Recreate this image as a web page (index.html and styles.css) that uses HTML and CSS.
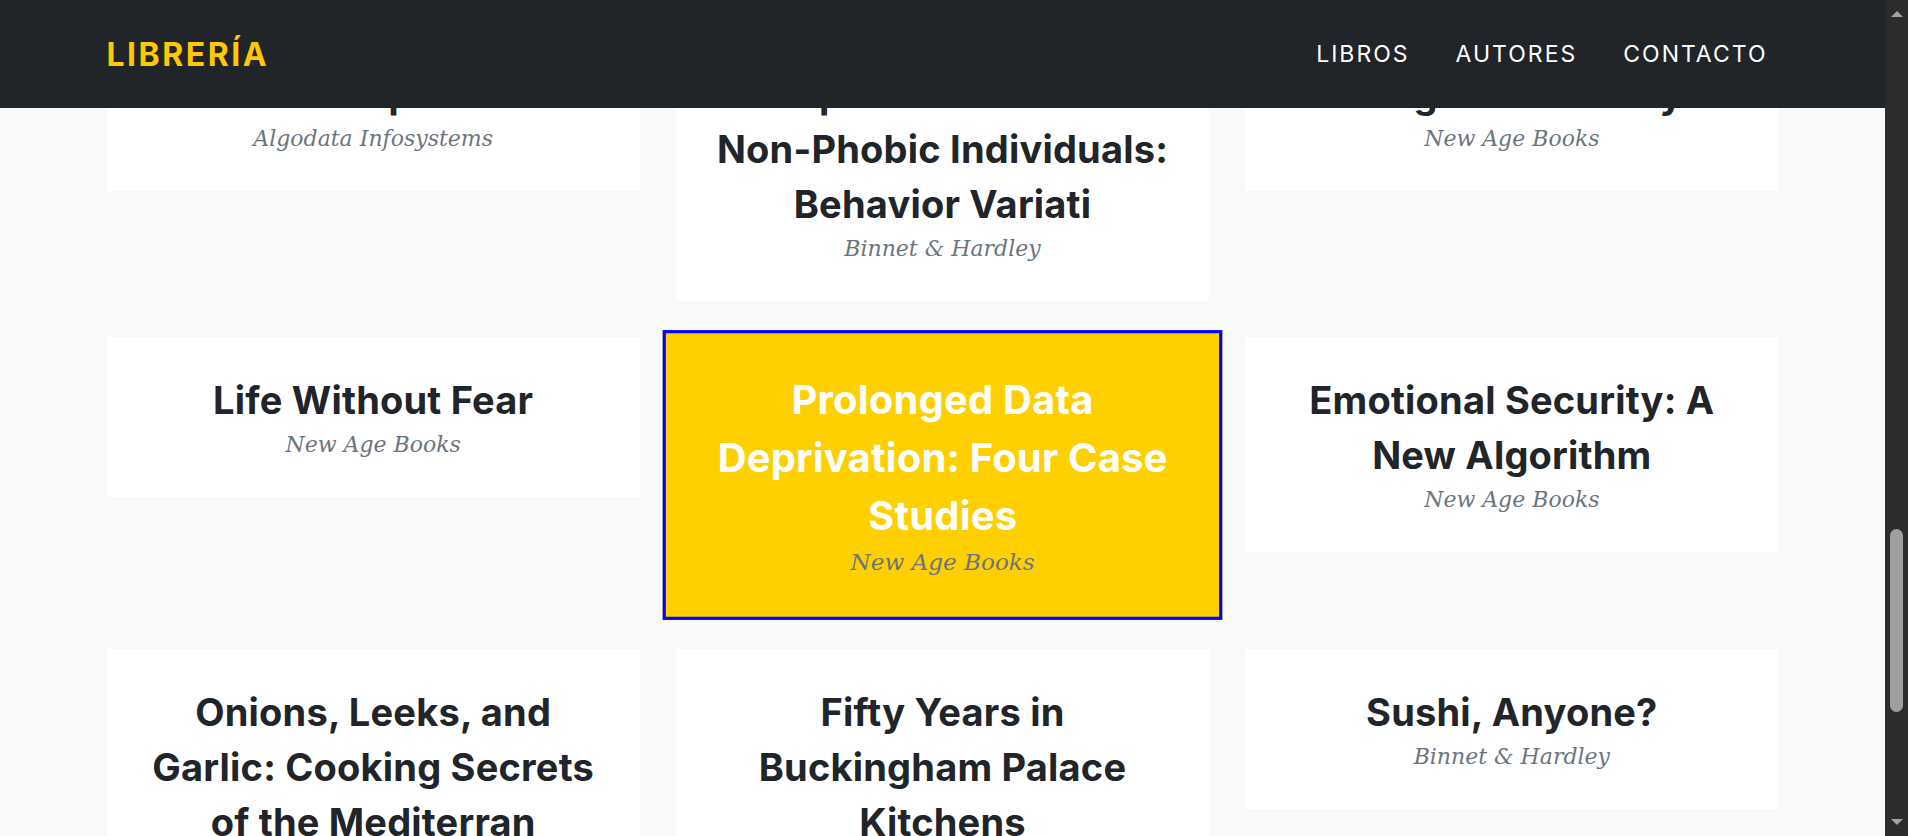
FILE: index.html
```html
<!DOCTYPE html>
<html lang="es">
<head>
<meta charset="utf-8">
<title>Librería</title>
<link rel="stylesheet" href="styles.css">
</head>
<body>
<div class="app">
  <div class="viewport" id="viewport">
    <nav class="navbar">
      <div class="container nav-inner">
        <a class="brand" href="#">Librería</a>
        <ul class="nav-links">
          <li><a href="#libros">Libros</a></li>
          <li><a href="#autores">Autores</a></li>
          <li><a href="#contacto">Contacto</a></li>
        </ul>
      </div>
    </nav>

    <section class="books-section" id="libros">
      <div class="container">
        <div class="book-grid">
          <article class="book"><h3 class="book-title">Net Etiquette</h3><p class="book-pub">Algodata Infosystems</p></article>
          <article class="book"><h3 class="book-title">Computer Phobic AND Non-Phobic Individuals: Behavior Variati</h3><p class="book-pub">Binnet &amp; Hardley</p></article>
          <article class="book"><h3 class="book-title">Is Anger the Enemy?</h3><p class="book-pub">New Age Books</p></article>
          <article class="book" id="anchor-row"><h3 class="book-title">Life Without Fear</h3><p class="book-pub">New Age Books</p></article>
          <article class="book is-active"><h3 class="book-title">Prolonged Data Deprivation: Four Case Studies</h3><p class="book-pub">New Age Books</p></article>
          <article class="book"><h3 class="book-title">Emotional Security: A New Algorithm</h3><p class="book-pub">New Age Books</p></article>
          <article class="book"><h3 class="book-title">Onions, Leeks, and Garlic: Cooking Secrets of the Mediterran</h3><p class="book-pub">Binnet &amp; Hardley</p></article>
          <article class="book"><h3 class="book-title">Fifty Years in Buckingham Palace Kitchens</h3><p class="book-pub">Binnet &amp; Hardley</p></article>
          <article class="book"><h3 class="book-title">Sushi, Anyone?</h3><p class="book-pub">Binnet &amp; Hardley</p></article>
        </div>
      </div>
    </section>
  </div>

  <div class="scrollbar" aria-hidden="true">
    <div class="sb-btn"><span class="sb-arrow-up"></span></div>
    <div class="sb-track"><div class="sb-thumb"></div></div>
    <div class="sb-btn"><span class="sb-arrow-down"></span></div>
  </div>
</div>
<script src="app.js"></script>
</body>
</html>
```

FILE: styles.css
```css
* { box-sizing: border-box; }

html, body {
  margin: 0;
  height: 100%;
  overflow: hidden;
}

body {
  font-family: "Inter", "DejaVu Sans", sans-serif;
  color: #212529;
  background: #f8f9fa;
}

.app {
  display: flex;
  height: 100vh;
}

.viewport {
  flex: 1;
  min-width: 0;
  overflow: hidden;
  background: #f8f9fa;
}

/* Scrollbar (dark theme) */
.scrollbar {
  width: 23px;
  flex: 0 0 23px;
  background: #2c2c2c;
  display: flex;
  flex-direction: column;
}
.sb-btn {
  height: 28px;
  display: flex;
  align-items: center;
  justify-content: center;
}
.sb-arrow-up {
  width: 0;
  height: 0;
  border-left: 6px solid transparent;
  border-right: 6px solid transparent;
  border-bottom: 6px solid #a3a3a3;
}
.sb-arrow-down {
  width: 0;
  height: 0;
  border-left: 6px solid transparent;
  border-right: 6px solid transparent;
  border-top: 6px solid #a3a3a3;
}
.sb-track {
  flex: 1;
  padding: 0 5px;
}
.sb-thumb {
  margin-top: 501px;
  height: 183px;
  background: #9f9f9f;
  border-radius: 7px;
}

.container {
  max-width: 1672px;
  margin: 0 auto;
}

/* Navbar */
.navbar {
  position: sticky;
  top: 0;
  z-index: 10;
  height: 108px;
  background: #212529;
}
.nav-inner {
  height: 100%;
  display: flex;
  align-items: center;
  justify-content: space-between;
}
.brand {
  font-family: "Inter", "DejaVu Sans", sans-serif;
  font-weight: 700;
  font-size: 32px;
  letter-spacing: 2.5px;
  text-transform: uppercase;
  color: #ffc800;
  text-decoration: none;
}
.nav-links {
  list-style: none;
  display: flex;
  gap: 46px;
  margin: 0;
  padding: 0 11px 0 0;
}
.nav-links a {
  font-family: "Inter", "DejaVu Sans", sans-serif;
  font-size: 23px;
  font-weight: 400;
  letter-spacing: 2px;
  text-transform: uppercase;
  color: #fff;
  text-decoration: none;
}

/* Books */
.books-section {
  padding: 0 0 200px;
}

.book-grid {
  display: grid;
  grid-template-columns: repeat(3, 1fr);
  gap: 36px;
  align-items: start;
}

.book {
  background: #fff;
  padding: 36px;
  text-align: center;
}
.book-title {
  margin: 0;
  font-family: "Inter", "DejaVu Sans", sans-serif;
  font-weight: 700;
  font-size: 38px;
  line-height: 55px;
  letter-spacing: 0.2px;
  color: #212529;
}
.book-pub {
  margin: 0;
  font-family: "DejaVu Serif", serif;
  font-style: italic;
  font-size: 22px;
  line-height: 33px;
  color: #6c757d;
}

.book.is-active {
  background: #ffd000;
  border: 3px solid #0000ff;
  transform: scale(1.05);
}
.book.is-active .book-title {
  color: #fff;
}
```

FILE: app.js
```js
(function () {
  function place() {
    var vp = document.getElementById('viewport');
    var anchor = document.getElementById('anchor-row');
    if (!vp || !anchor) return;
    var delta = anchor.getBoundingClientRect().top - 337;
    vp.scrollTop = vp.scrollTop + delta;
  }
  place();
  window.addEventListener('load', place);
  if (document.fonts && document.fonts.ready) {
    document.fonts.ready.then(place);
  }
})();
```
